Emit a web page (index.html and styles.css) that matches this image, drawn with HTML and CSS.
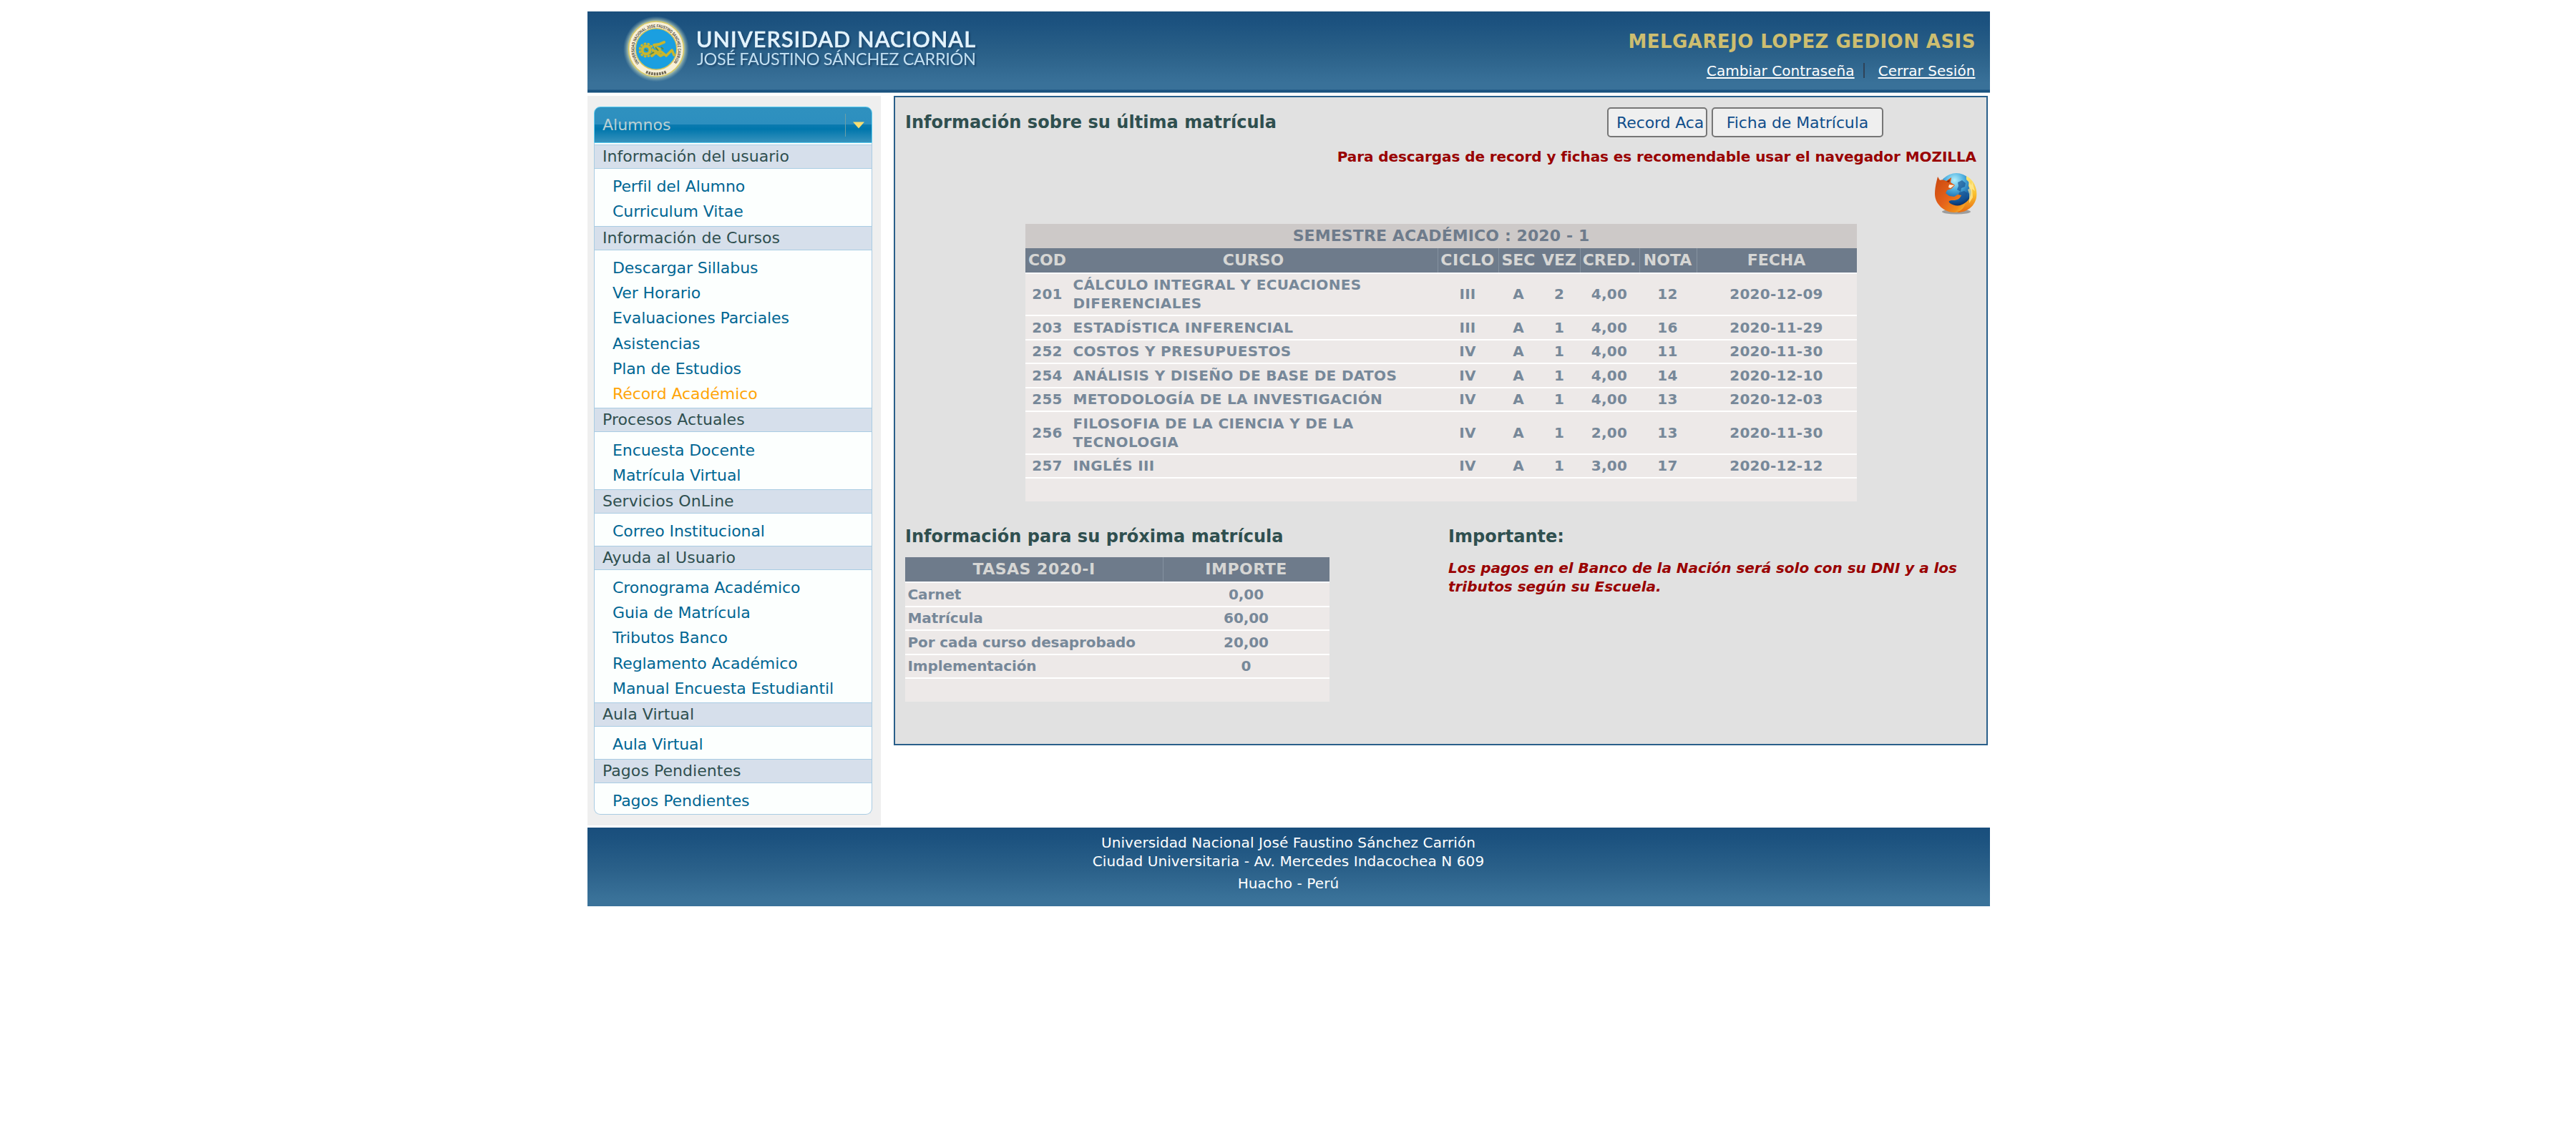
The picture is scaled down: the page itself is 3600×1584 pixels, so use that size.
FILE: index.html
```html
<!DOCTYPE html>
<html lang="es">
<head>
<meta charset="utf-8">
<title>Universidad Nacional José Faustino Sánchez Carrión</title>
<link rel="stylesheet" href="styles.css">
</head>
<body>
<div class="page">
  <header class="header">
    <svg class="logo" width="560" height="108" viewBox="0 0 560 108">
      <defs>
        <radialGradient id="glow">
          <stop offset=".82" stop-color="#eef0b0" stop-opacity=".85"/>
          <stop offset="1" stop-color="#8fb8c8" stop-opacity="0"/>
        </radialGradient>
        <path id="ring" d="M72.500 72.200 A30.500 30.500 0 1 1 119.500 72.200"/>
      </defs>
      <circle cx="96" cy="52.500" r="46" fill="url(#glow)"/>
      <circle cx="96" cy="52.500" r="38.500" fill="#f7f0d8" stroke="#d8c860" stroke-width="1.500"/>
      <circle cx="96" cy="52.500" r="28.800" fill="#1b9fe0" stroke="#d5c45a" stroke-width="1.500"/>
      <text class="seal-text"><textPath href="#ring" textLength="136" lengthAdjust="spacingAndGlyphs">UNIVERSIDAD NACIONAL JOSE FAUSTINO SANCHEZ CARRION</textPath></text>
      <path d="M82 84.500 A35 35 0 0 0 110 84.500" fill="none" stroke="#6d6450" stroke-width="4" stroke-dasharray="2.500 1.200"/>
      <g fill="none" stroke="#c9b62c" stroke-linecap="round" stroke-linejoin="round">
        <circle cx="82" cy="54" r="5.500" stroke-width="4"/>
        <circle cx="82" cy="54" r="9" stroke-width="3" stroke-dasharray="1 4"/>
        <path d="M93 47l7-1 7-3M95 50l6 3M92 55l9 2M90 62l6-5 6 5 4-2" stroke-width="4"/>
        <path d="M103 56l7 6 8-8 3 7" stroke-width="3.500"/>
      </g>
      <path d="M80 53l4 2M95 50l4 5M88 60l5-3M103 50l3 3" stroke="#5e8a45" stroke-width="2" fill="none"/>
      <g class="wordmark">
        <text class="logo-main" x="152" y="50" textLength="390">UNIVERSIDAD NACIONAL</text>
        <text class="logo-sub" x="153" y="74.500" textLength="390">JOSÉ FAUSTINO SÁNCHEZ CARRIÓN</text>
      </g>
    </svg>
    <div class="account">
      <div class="user">MELGAREJO LOPEZ GEDION ASIS</div>
      <div class="links"><a href="#">Cambiar Contraseña</a><span class="bar"></span><a href="#">Cerrar Sesión</a></div>
    </div>
  </header>

  <div class="main">
    <nav class="sidebar">
      <div class="menu-head"><span>Alumnos</span><span class="toggle"><svg width="16" height="10" viewBox="0 0 16 10"><path d="M0 .5h16L8 9.500z" fill="#f7de72"/></svg></span></div>
      <div class="menu">
        <h3>Información del usuario</h3>
        <ul><li>Perfil del Alumno</li><li>Curriculum Vitae</li></ul>
        <h3>Información de Cursos</h3>
        <ul><li>Descargar Sillabus</li><li>Ver Horario</li><li>Evaluaciones Parciales</li><li>Asistencias</li><li>Plan de Estudios</li><li class="active">Récord Académico</li></ul>
        <h3>Procesos Actuales</h3>
        <ul><li>Encuesta Docente</li><li>Matrícula Virtual</li></ul>
        <h3>Servicios OnLine</h3>
        <ul><li>Correo Institucional</li></ul>
        <h3>Ayuda al Usuario</h3>
        <ul><li>Cronograma Académico</li><li>Guia de Matrícula</li><li>Tributos Banco</li><li>Reglamento Académico</li><li>Manual Encuesta Estudiantil</li></ul>
        <h3>Aula Virtual</h3>
        <ul><li>Aula Virtual</li></ul>
        <h3>Pagos Pendientes</h3>
        <ul><li>Pagos Pendientes</li></ul>
      </div>
    </nav>

    <section class="panel">
      <div class="title-row">
        <h2>Información sobre su última matrícula</h2>
        <div class="buttons"><button class="btn record">Record Aca</button><button class="btn ficha">Ficha de Matrícula</button></div>
      </div>
      <p class="notice">Para descargas de record y fichas es recomendable usar el navegador MOZILLA</p>
      <div class="browser">
        <svg width="60" height="60" viewBox="0 0 60 60">
          <defs>
            <radialGradient id="globe" cx=".45" cy=".2" r=".75"><stop offset="0" stop-color="#b5f0fb"/><stop offset=".35" stop-color="#4fb0e0"/><stop offset=".75" stop-color="#125a9f"/><stop offset="1" stop-color="#0a2457"/></radialGradient>
            <linearGradient id="fur" x1="0" y1="0" x2="1" y2="1"><stop offset="0" stop-color="#c8470f"/><stop offset=".5" stop-color="#e5621a"/><stop offset=".8" stop-color="#f08a18"/><stop offset="1" stop-color="#f8c83c"/></linearGradient>
            <linearGradient id="tail" x1="0" y1="0" x2="0" y2="1"><stop offset="0" stop-color="#fbe67a"/><stop offset=".5" stop-color="#f9bf2c"/><stop offset="1" stop-color="#e86a10"/></linearGradient>
          </defs>
          <ellipse cx="31" cy="55" rx="20" ry="3.500" fill="#000" opacity=".3"/>
          <circle cx="31" cy="26" r="25" fill="url(#globe)"/>
          <path d="M33 14l6-3 5 4-1 5-5 2-1 5-5-3 2-5zM35 28l7-2 5 3-3 8-6 3-5-4z" fill="#174f8d" opacity=".65"/>
          <path d="M45 5C55 10 61 22 59 35 57 47 46 56 33 56c-4-3 0-9 8-12 8-4 12-12 10-20l-3-5 1-5-4-4z" fill="url(#tail)"/>
          <path d="M48 11l4 7 1-5 4 13-4-3 1 12-5 8 0-13-2-6 2-1z" fill="#fff0a0" opacity=".7"/>
          <path d="M5 6l3 5c4-1 7 0 9 1l7-5-1 7 6 4-5 5-6 2-2 4 5 4 7 1 5-3 5 1c-2 5-6 7-11 7-6 0-8 1-5 4 7 5 15 4 22 0-3 8-8 13-16 13C15 56 1 45 1 30 1 21 3 14 5 6z" fill="url(#fur)"/>
          <path d="M21 17l7 1-5 4-3-1z" fill="#fff4df"/>
          <path d="M17 13l5-3-1 4z" fill="#8b2b0c"/>
        </svg>
      </div>

      <table class="grades">
        <colgroup><col class="c-cod"><col class="c-curso"><col class="c-ciclo"><col class="c-sec"><col class="c-vez"><col class="c-cred"><col class="c-nota"><col></colgroup>
        <thead>
          <tr class="caption"><th colspan="8">SEMESTRE ACADÉMICO : 2020 - 1</th></tr>
          <tr class="cols"><th>COD</th><th>CURSO</th><th class="ciclo">CICLO</th><th>SEC</th><th class="plain">VEZ</th><th>CRED.</th><th>NOTA</th><th>FECHA</th></tr>
        </thead>
        <tbody>
          <tr class="tall"><td>201</td><td>CÁLCULO INTEGRAL Y ECUACIONES DIFERENCIALES</td><td>III</td><td>A</td><td>2</td><td>4,00</td><td>12</td><td>2020-12-09</td></tr>
          <tr><td>203</td><td>ESTADÍSTICA INFERENCIAL</td><td>III</td><td>A</td><td>1</td><td>4,00</td><td>16</td><td>2020-11-29</td></tr>
          <tr><td>252</td><td>COSTOS Y PRESUPUESTOS</td><td>IV</td><td>A</td><td>1</td><td>4,00</td><td>11</td><td>2020-11-30</td></tr>
          <tr><td>254</td><td>ANÁLISIS Y DISEÑO DE BASE DE DATOS</td><td>IV</td><td>A</td><td>1</td><td>4,00</td><td>14</td><td>2020-12-10</td></tr>
          <tr><td>255</td><td>METODOLOGÍA DE LA INVESTIGACIÓN</td><td>IV</td><td>A</td><td>1</td><td>4,00</td><td>13</td><td>2020-12-03</td></tr>
          <tr class="tall"><td>256</td><td>FILOSOFIA DE LA CIENCIA Y DE LA TECNOLOGIA</td><td>IV</td><td>A</td><td>1</td><td>2,00</td><td>13</td><td>2020-11-30</td></tr>
          <tr><td>257</td><td>INGLÉS III</td><td>IV</td><td>A</td><td>1</td><td>3,00</td><td>17</td><td>2020-12-12</td></tr>
          <tr><td colspan="8"></td></tr>
        </tbody>
      </table>

      <div class="next">
        <div class="fees-col">
          <h2>Información para su próxima matrícula</h2>
          <table class="fees">
            <colgroup><col class="c-tasa"><col></colgroup>
            <thead><tr><th>TASAS 2020-I</th><th>IMPORTE</th></tr></thead>
            <tbody>
              <tr><td>Carnet</td><td>0,00</td></tr>
              <tr><td>Matrícula</td><td>60,00</td></tr>
              <tr><td>Por cada curso desaprobado</td><td>20,00</td></tr>
              <tr><td>Implementación</td><td>0</td></tr>
              <tr><td></td><td></td></tr>
            </tbody>
          </table>
        </div>
        <div class="important">
          <h2>Importante:</h2>
          <p>Los pagos en el Banco de la Nación será solo con su DNI y a los<br>tributos según su Escuela.</p>
        </div>
      </div>
    </section>
  </div>

  <footer class="footer">
    <p>Universidad Nacional José Faustino Sánchez Carrión</p>
    <p>Ciudad Universitaria - Av. Mercedes Indacochea N 609</p>
    <p class="city">Huacho - Perú</p>
  </footer>
</div>
</body>
</html>
```
FILE: styles.css
```css
* { box-sizing: border-box; }
body { margin: 0; padding: 16px 0 0 1px; background: #fff; font-family: Verdana, "DejaVu Sans", sans-serif; font-size: 20px; }
h2, h3, p, ul { margin: 0; padding: 0; }
ul { list-style: none; }

.page { width: 1960px; margin: 0 auto; }

/* Header */
.header {
  display: flex; justify-content: space-between; align-items: flex-start;
  height: 114px; padding-right: 20px;
  background: linear-gradient(#1b4f7c, #1c527f 16px, #2b6189 60px, #397199 100px, #397199 109px, #1c5481 110px, #17507c 113px, #7fa0b9 113px);
}
.logo { display: block; }
.seal-text { font: bold 6px "Liberation Sans", sans-serif; fill: #4b4436; }
.logo-main { font: 500 30.500px Lato, sans-serif; fill: #e3f3fd; stroke: #e3f3fd; stroke-width: .7px; }
.logo-sub { font: 400 23.500px Lato, sans-serif; fill: #c2dff1; }
.wordmark { filter: drop-shadow(2px 2px 1px rgba(16, 50, 85, .6)); }
.account { display: flex; flex-direction: column; align-items: flex-end; padding-top: 25.500px; }
.user { font-weight: bold; font-size: 26px; line-height: 32px; letter-spacing: .45px; margin-right: -.4px; color: #cdbe70; }
.links { display: flex; align-items: center; margin-top: 12px; line-height: 26px; }
.links a { color: #fff; letter-spacing: .06px; text-decoration: underline; text-underline-offset: 2px; text-decoration-thickness: 2px; }
.bar { width: 2px; height: 21px; margin: 0 19px 0 12px; background: #2f4359; }

/* Columns */
.main { display: flex; align-items: flex-start; gap: 18.500px; margin-top: 4px; }
.sidebar { width: 410px; height: 1020px; padding: 15px 12px 0 9.500px; background: #efefef; }

.menu-head {
  display: flex; align-items: center; justify-content: space-between;
  height: 51px; padding: 0 10px 0 11px;
  border: 1.500px solid #5fcdf0; border-radius: 9px 9px 0 0;
  background: linear-gradient(#2f91bf, #2d8fbf 49%, #0b7bb0 50%, #0076ac 62%, #3793bd);
  color: #b9d0d3; font-size: 22px;
}
.toggle { display: flex; align-items: center; justify-content: flex-end; width: 27px; height: 32px; border-left: 1px solid #6c9fa5; }
.menu { border: 1px solid #a9cce3; border-top: 0; border-radius: 0 0 9px 9px; background: #fcfffe; padding-top: 2px; overflow: hidden; }
.menu h3 {
  height: 33.750px; line-height: 31.500px; padding-left: 11px;
  border: 0 solid #a9cce3; border-top-width: 1px; border-bottom-width: 1px;
  background: #d6dfeb; color: #2f4f4f; font-size: 22px; font-weight: normal; letter-spacing: .05px;
}
.menu ul { padding: 7.500px 0 2.200px 25px; }
.menu li { height: 35.200px; line-height: 35.200px; font-size: 22px; letter-spacing: -.08px; color: #006693; }
.menu ul:last-child { padding-bottom: 1px; }
.menu .active { color: #ffa50a; }

/* Content panel */
.panel { width: 1529px; height: 908px; padding: 14px 14px 0; border: 2px solid #2a5f8a; background: #e1e1e1; }
h2 { color: #2f4f4f; font-size: 24px; line-height: 30px; letter-spacing: .04px; }
.title-row { display: flex; align-items: center; justify-content: space-between; height: 42px; }
.title-row h2 { margin-top: -1px; }
.buttons { display: flex; gap: 6px; margin-right: 130px; }
.btn {
  height: 42px; border: 2px solid #767676; border-radius: 5px; background: #efefef;
  color: #104e8b; font: 22px Verdana, "DejaVu Sans", sans-serif; letter-spacing: -.1px;
  white-space: nowrap; overflow: hidden; text-align: left;
}
.record { width: 140px; padding: 0 0 0 11px; }
.ficha { width: 240px; padding: 0; text-align: center; }
.notice { margin-top: 14px; line-height: 26px; text-align: right; font-weight: bold; letter-spacing: -.075px; color: #990000; }
.browser { display: flex; justify-content: flex-end; margin: 9px -1px 0 0; height: 60px; }

table { border-collapse: separate; border-spacing: 0; table-layout: fixed; font-weight: bold; }
th { height: 34px; padding: 0; background: #6e7b8b; color: #d6d6d4; font-size: 22px; line-height: 28px; border-left: 1px solid #8592a0; }
th:first-child, th:nth-child(2), th.plain { border-left-color: #6e7b8b; }
td { height: 33.500px; padding: 0; border-top: 2px solid #fff; background: #ede9e8; color: #778899; font-size: 20px; line-height: 26px; text-align: center; }

.grades { width: 1162px; margin: 12px 0 0 168px; }
.grades .caption th { background: #cdc9c8; color: #6e7b8b; border-left: 0; letter-spacing: .1px; }
.grades .cols th { height: 33.500px; padding-right: 2px; }
.grades .ciclo { letter-spacing: .6px; }
.grades .tall td { height: 59.500px; }
.grades td { letter-spacing: .25px; padding-right: 1px; }
.grades td:nth-child(2) { text-align: left; padding-left: 4.500px; letter-spacing: .34px; }
.c-cod { width: 62px; }
.c-curso { width: 514px; }
.c-ciclo { width: 85px; }
.c-sec { width: 57px; }
.c-vez { width: 57px; }
.c-cred { width: 83px; }
.c-nota { width: 80px; }

.next { display: flex; margin-top: 34px; }
.fees-col { width: 759px; }
.fees { width: 593px; margin-top: 14px; }
.fees .c-tasa { width: 360px; }
.fees th { letter-spacing: .5px; height: 34.500px; padding-right: 1px; }
.fees th:nth-child(2) { border-left-color: #8592a0; }
.fees td { letter-spacing: -.1px; }
.fees td:first-child { text-align: left; padding-left: 3.500px; }
.important p { margin-top: 17.500px; line-height: 25.500px; font-weight: bold; font-style: italic; letter-spacing: -.04px; color: #990000; }

/* Footer */
.footer { height: 110.500px; margin-top: 2.500px; padding-top: 9.500px; text-align: center; color: #fff; background: linear-gradient(#194e7c, #1c527f 16px, #2b618a 60px, #3a7299 100px); }
.footer p { line-height: 25.500px; letter-spacing: .1px; }
.footer .city { margin-top: 5.500px; }
```
